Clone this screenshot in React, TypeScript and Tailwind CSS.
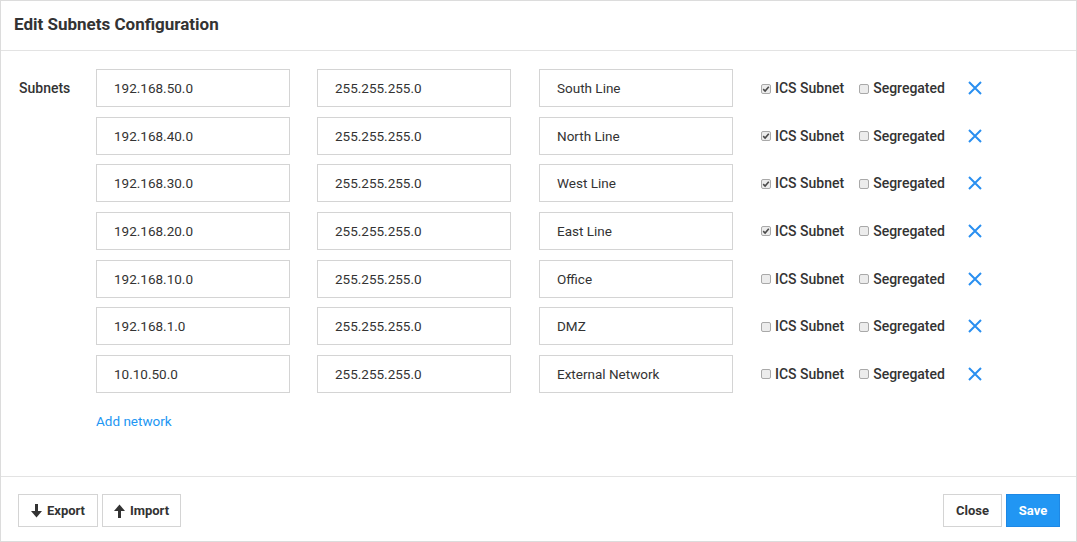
import React from 'react';

type Subnet = { ip: string; mask: string; name: string; ics: boolean; segregated: boolean };

const subnets: Subnet[] = [
  { ip: '192.168.50.0', mask: '255.255.255.0', name: 'South Line', ics: true, segregated: false },
  { ip: '192.168.40.0', mask: '255.255.255.0', name: 'North Line', ics: true, segregated: false },
  { ip: '192.168.30.0', mask: '255.255.255.0', name: 'West Line', ics: true, segregated: false },
  { ip: '192.168.20.0', mask: '255.255.255.0', name: 'East Line', ics: true, segregated: false },
  { ip: '192.168.10.0', mask: '255.255.255.0', name: 'Office', ics: false, segregated: false },
  { ip: '192.168.1.0', mask: '255.255.255.0', name: 'DMZ', ics: false, segregated: false },
  { ip: '10.10.50.0', mask: '255.255.255.0', name: 'External Network', ics: false, segregated: false },
];

const Box: React.FC<{ checked: boolean }> = ({ checked }) => (
  <span className="w-[10px] h-[10px] rounded-[2px] border border-[#a9a9a9] bg-[#ececec] flex items-center justify-center shrink-0">
    {checked && (
      <svg width="8" height="8" viewBox="0 0 8 8">
        <path d="M1.2 4.2 L3.1 6 L6.8 1.8" fill="none" stroke="#4a4a4a" strokeWidth="1.6" />
      </svg>
    )}
  </span>
);

const Field: React.FC<{ value: string }> = ({ value }) => (
  <div className="w-[194px] h-[38px] border border-[#d4d4d4] bg-white flex items-center pl-[17px] text-[13.5px] text-[#333]">
    {value}
  </div>
);

const Arrow: React.FC<{ up?: boolean }> = ({ up }) => (
  <svg width="11" height="14" viewBox="0 0 11 14" className={up ? 'rotate-180' : ''}>
    <rect x="4" y="0" width="3" height="8" fill="#333" />
    <path d="M0 7 H11 L5.5 13.5 Z" fill="#333" />
  </svg>
);

export default function App() {
  return (
    <div
      className="w-[1077px] h-[542px] border border-[#dcdcdc] bg-white flex flex-col text-[#333]"
      style={{ fontFamily: 'Roboto, "Liberation Sans", sans-serif' }}
    >
      <div className="h-[50px] border-b border-[#e3e3e3] flex items-center px-[13px] pb-[2px] shrink-0">
        <h1 className="text-[17px] font-bold text-[#333]">Edit Subnets Configuration</h1>
      </div>

      <div className="flex-1 flex pt-[18px] pl-[18px]">
        <div className="w-[77px] h-[38px] flex items-center text-[14px] font-medium">Subnets</div>
        <div className="flex flex-col">
          <div className="flex flex-col gap-[9.67px]">
            {subnets.map((s) => (
              <div key={s.name} className="flex items-center">
                <Field value={s.ip} />
                <div className="w-[27px]" />
                <Field value={s.mask} />
                <div className="w-[28px]" />
                <Field value={s.name} />
                <div className="w-[28px]" />
                <label className="flex items-center gap-[4px] text-[14px] font-medium pt-[1px]">
                  <Box checked={s.ics} />
                  ICS Subnet
                </label>
                <label className="flex items-center gap-[4px] text-[14px] font-medium ml-[15px] pt-[1px]">
                  <Box checked={s.segregated} />
                  Segregated
                </label>
                <svg width="14" height="14" viewBox="0 0 14 14" className="ml-[23px]">
                  <path d="M1 1 L13 13 M13 1 L1 13" stroke="#2a8ff0" strokeWidth="2" />
                </svg>
              </div>
            ))}
          </div>
          <a className="mt-[18px] text-[13.5px] text-[#2196f3] cursor-pointer">Add network</a>
        </div>
      </div>

      <div className="h-[65px] border-t border-[#e3e3e3] flex items-center justify-between pl-[17px] pr-[16px] pt-[3px] shrink-0">
        <div className="flex items-center gap-[4px]">
          <button className="h-[33px] w-[80px] border border-[#d4d4d4] bg-white flex items-center justify-center gap-[5px] text-[13px] font-bold">
            <Arrow />
            Export
          </button>
          <button className="h-[33px] w-[79px] border border-[#d4d4d4] bg-white flex items-center justify-center gap-[5px] text-[13px] font-bold">
            <Arrow up />
            Import
          </button>
        </div>
        <div className="flex items-center gap-[4px]">
          <button className="h-[33px] w-[59px] border border-[#d4d4d4] bg-white text-[13px] font-bold">Close</button>
          <button className="h-[33px] w-[54px] border border-[#1e88e5] bg-[#2196f3] text-white text-[13px] font-bold">Save</button>
        </div>
      </div>
    </div>
  );
}
